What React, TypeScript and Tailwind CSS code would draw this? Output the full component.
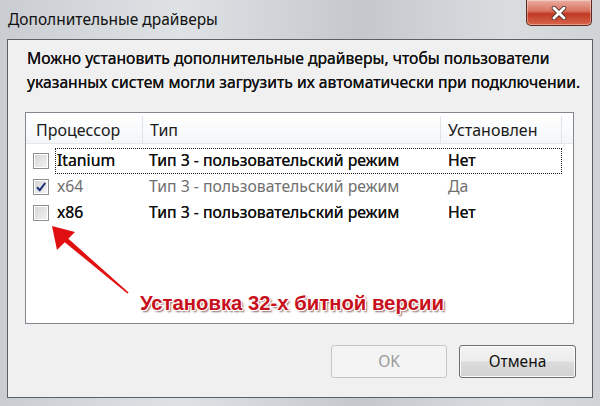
import React from "react";

const font = "font-['Noto_Sans','Open_Sans','DejaVu_Sans',sans-serif]";

interface IRow {
  cpu: string;
  type: string;
  installed: string;
  checked?: boolean;
  muted?: boolean;
  focused?: boolean;
}

const rows: IRow[] = [
  { cpu: "Itanium", type: "Тип 3 - пользовательский режим", installed: "Нет", focused: true },
  { cpu: "x64", type: "Тип 3 - пользовательский режим", installed: "Да", checked: true, muted: true },
  { cpu: "x86", type: "Тип 3 - пользовательский режим", installed: "Нет" },
];

const Checkbox = ({ checked }: { checked?: boolean }) => (
  <div className="flex h-[16px] w-[16px] shrink-0 items-center justify-center border border-[#8e8f8f] bg-white">
    <div className="flex h-[12px] w-[12px] items-center justify-center bg-[linear-gradient(135deg,#d6d6d6,#f2f2f2)]">
      {checked && (
        <svg width="12" height="12" viewBox="0 0 12 12">
          <path d="M2 6.2 L4.8 9.2 L10.2 2" fill="none" stroke="#1c2f7a" strokeWidth="2" />
        </svg>
      )}
    </div>
  </div>
);

const Row = ({ cpu, type, installed, checked, muted, focused }: IRow) => (
  <div
    className={`flex h-[26px] items-center pl-[7px] ${
      muted ? "text-[#707070]" : "text-[#111] [text-shadow:0_0_0.4px_currentColor]"
    }`}
  >
    <Checkbox checked={checked} />
    <div
      className={`ml-[6px] flex h-full w-[507px] items-center border border-dotted ${
        focused ? "border-[#222]" : "border-transparent"
      }`}
    >
      <div className="w-[90px] pl-[1px]">{cpu}</div>
      <div className="w-[298px] pl-[3px]">{type}</div>
      <div className="pl-[4px]">{installed}</div>
    </div>
  </div>
);

const App = () => {
  return (
    <div
      className={`relative h-[406px] w-[600px] overflow-hidden bg-[linear-gradient(90deg,#c9cdd1,#dfe2e5_30%,#c4c8cc_60%,#dadde0_85%,#cfd3d6)] ${font}`}
    >
      {/* title bar */}
      <div className="flex h-[39px] items-start justify-between">
        <span className="pl-[8px] pt-[8px] text-[15.5px] leading-[22px] text-[#111]">
          Дополнительные драйверы
        </span>
        <div className="mr-[8px] flex h-[26px] w-[66px] items-center justify-center rounded-b-[5px] border border-t-0 border-[#5b2a22] bg-[linear-gradient(180deg,#eab0a3_0%,#d9705e_45%,#c03a24_55%,#d9654c_100%)] shadow-[inset_0_0_0_1px_rgba(255,255,255,0.35)]">
          <svg width="16" height="14" viewBox="0 0 16 14">
            <path d="M3 2 L13 12 M13 2 L3 12" stroke="#3a1a14" strokeWidth="4.5" strokeLinecap="round" />
            <path d="M3 2 L13 12 M13 2 L3 12" stroke="#fff" strokeWidth="3" strokeLinecap="round" />
          </svg>
        </div>
      </div>

      {/* client area */}
      <div className="mx-[7px] flex h-[359px] flex-col border border-[#5c6066] bg-[#f0f0f0]">
        <p className="ml-[19px] mt-[6px] text-[15.7px] leading-[24px] text-[#111] [text-shadow:0_0_0.3px_currentColor]">
          Можно установить дополнительные драйверы, чтобы пользователи
          <br />
          указанных систем могли загрузить их автоматически при подключении.
        </p>

        <div className="ml-[17px] mt-[18px] h-[212px] w-[549px] border border-[#828790] bg-white text-[15.75px]">
          <div className="flex h-[31px] items-center border-b border-[#e4e7eb] bg-[linear-gradient(180deg,#ffffff,#f4f6f8)] pt-[3px] text-[16px] text-[#1a1a1a]">
            <div className="flex h-full w-[117px] items-center border-r border-[#e0e3e8] pl-[10px]">
              Процессор
            </div>
            <div className="flex h-full w-[298px] items-center border-r border-[#e0e3e8] pl-[7px]">
              Тип
            </div>
            <div className="flex h-full w-[121px] items-center border-r border-[#e0e3e8] pl-[7px]">
              Установлен
            </div>
          </div>
          <div className="pt-[4px]">
            {rows.map((r) => (
              <Row key={r.cpu} {...r} />
            ))}
          </div>
        </div>

        <div className="mt-[21px] flex justify-end gap-[12px] pr-[16px]">
          <button className="h-[33px] w-[116px] rounded-[3px] border border-[#c6c6c6] bg-[#f4f4f4] text-[15.5px] text-[#9a9a9a]">
            OK
          </button>
          <button className="h-[33px] w-[117px] rounded-[3px] border border-[#6f6f6f] bg-[linear-gradient(180deg,#f4f4f4_0%,#ececec_48%,#dcdcdc_52%,#d2d2d2_100%)] text-[15.5px] text-[#111] shadow-[inset_0_0_0_1px_#fafafa]">
            Отмена
          </button>
        </div>
      </div>

      {/* annotation */}
      <svg className="pointer-events-none absolute left-0 top-0" width="600" height="406">
        <polygon points="52,226 57,250 75,232" fill="#e01010" />
        <polygon points="64.4,241.9 67.6,238.1 128.6,292.4 127.4,293.6" fill="#e01010" />
      </svg>
      <span className="absolute left-[140px] top-[291px] font-['Liberation_Sans',sans-serif] text-[20.3px] font-bold leading-[24px] text-[#c8101c] [text-shadow:1px_1px_0_#fff,-1px_-1px_0_#fff,1px_-1px_0_#fff,-1px_1px_0_#fff,2px_2px_2px_#8a6060]">
        Установка 32-х битной версии
      </span>
    </div>
  );
};

export default App;
